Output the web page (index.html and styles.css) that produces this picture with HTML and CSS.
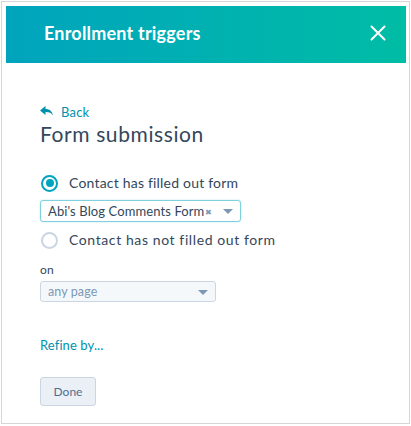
FILE: index.html
```html
<!DOCTYPE html>
<html>
<head>
<meta charset="utf-8">
<link rel="stylesheet" href="styles.css">
</head>
<body>
<div class="frame">
  <div class="header">
    <h1 class="title">Enrollment triggers</h1>
    <svg class="close" width="16" height="16" viewBox="0 0 16 16"><path d="M1.5 1.5L14.5 14.5M14.5 1.5L1.5 14.5" stroke="#fff" stroke-width="2" stroke-linecap="round"/></svg>
  </div>
  <div class="body">
    <a class="back"><svg class="back-icon" width="13" height="10" viewBox="0 0 13 10"><path d="M0 4.5L5.5 0V3C9.5 3 12 5 13 9.5C11.5 7 9.5 6 5.5 6V9Z" fill="#0091ae"/></svg>Back</a>
    <h2 class="heading">Form submission</h2>
    <label class="radio-row first">
      <span class="radio checked"></span>
      <span class="radio-label">Contact has filled out form</span>
    </label>
    <div class="select wide focused">
      <span class="select-value">Abi's Blog Comments Form</span>
      <span class="clear">&#x2716;</span>
      <span class="caret"></span>
    </div>
    <label class="radio-row second">
      <span class="radio"></span>
      <span class="radio-label wide-label">Contact has not filled out form</span>
    </label>
    <div class="field-label">on</div>
    <div class="select narrow">
      <span class="select-value placeholder">any page</span>
      <span class="caret"></span>
    </div>
    <a class="refine">Refine by...</a>
    <button class="done">Done</button>
  </div>
</div>
</body>
</html>
```

FILE: styles.css
```css
html, body {
  margin: 0;
  padding: 0;
  background: #fff;
}
body {
  font-family: Lato, "Open Sans", sans-serif;
  color: #33475b;
}
.frame {
  margin: 1px;
  width: 400px;
  height: 415px;
  border: 1px solid #d6d6d6;
  padding: 4px 3px 2px 4px;
  box-sizing: content-box;
}
.header {
  height: 57px;
  background: linear-gradient(to right, #00a4bd, #00bda5);
  display: flex;
  align-items: center;
  justify-content: space-between;
  padding: 0 20px 0 38px;
}
.title {
  margin: 0 0 3px 0;
  font-size: 18px;
  font-weight: 700;
  color: #fff;
  letter-spacing: 0.2px;
}
.close {
  display: block;
  margin-top: -3px;
}
.body {
  padding: 41px 34px 0 34px;
  display: flex;
  flex-direction: column;
  align-items: flex-start;
}
.back {
  display: flex;
  align-items: center;
  color: #0091ae;
  font-size: 13px;
  line-height: 16px;
  letter-spacing: 0.2px;
}
.back-icon {
  margin-right: 8px;
  margin-top: -2px;
}
.heading {
  margin: 1px 0 0 0;
  font-size: 21px;
  font-weight: 400;
  line-height: 26px;
  letter-spacing: 0.6px;
  color: #33475b;
}
.radio-row {
  display: flex;
  align-items: center;
}
.radio-row.first {
  margin-top: 27px;
}
.radio-row.second {
  margin-top: 9px;
}
.radio {
  width: 17px;
  height: 17px;
  border-radius: 50%;
  border: 2px solid #cbd6e2;
  box-sizing: border-box;
  position: relative;
  margin-left: 1px;
  margin-right: 11px;
}
.radio.checked {
  border: 2px solid #00a4bd;
}
.radio.checked::after {
  content: "";
  position: absolute;
  left: 2.5px;
  top: 2.5px;
  width: 8px;
  height: 8px;
  border-radius: 50%;
  background: #00a4bd;
}
.radio-label {
  font-size: 14px;
  line-height: 18px;
  letter-spacing: 0.2px;
  color: #33475b;
}
.radio-label.wide-label {
  letter-spacing: 0.6px;
}
.select {
  display: flex;
  align-items: center;
  height: 22px;
  box-sizing: border-box;
  border: 1px solid #cbd6e2;
  border-radius: 3px;
  background: #f5f8fa;
  padding: 0 0 0 7px;
  margin-top: 8px;
  position: relative;
}
.select.wide {
  width: 201px;
}
.select.focused {
  border-color: #7fd1de;
  background: #fff;
  box-shadow: 0 0 2px rgba(0, 164, 189, 0.25);
}
.select.narrow {
  width: 176px;
  height: 21px;
  margin-top: 4px;
}
.select-value {
  font-size: 13px;
  color: #33475b;
  white-space: nowrap;
  letter-spacing: 0.1px;
}
.select-value.placeholder {
  color: #7c98b6;
  font-size: 12.5px;
}
.clear {
  font-size: 8px;
  color: #7c98b6;
  margin-left: 1px;
  margin-top: 1px;
}
.caret {
  position: absolute;
  right: 7px;
  top: 8px;
  width: 0;
  height: 0;
  border-left: 5px solid transparent;
  border-right: 5px solid transparent;
  border-top: 5px solid #7c98b6;
}
.field-label {
  font-size: 12px;
  line-height: 14px;
  margin-top: 14px;
  color: #33475b;
  letter-spacing: 0.2px;
}
.refine {
  color: #0091ae;
  font-size: 13px;
  line-height: 16px;
  margin-top: 35px;
  letter-spacing: 0.1px;
}
.done {
  margin-top: 24px;
  width: 56px;
  height: 29px;
  border: 1px solid #cbd6e2;
  border-radius: 3px;
  background: #eaf0f6;
  color: #506e91;
  font-family: Lato, "Open Sans", sans-serif;
  font-size: 12px;
  padding: 0;
}
```
